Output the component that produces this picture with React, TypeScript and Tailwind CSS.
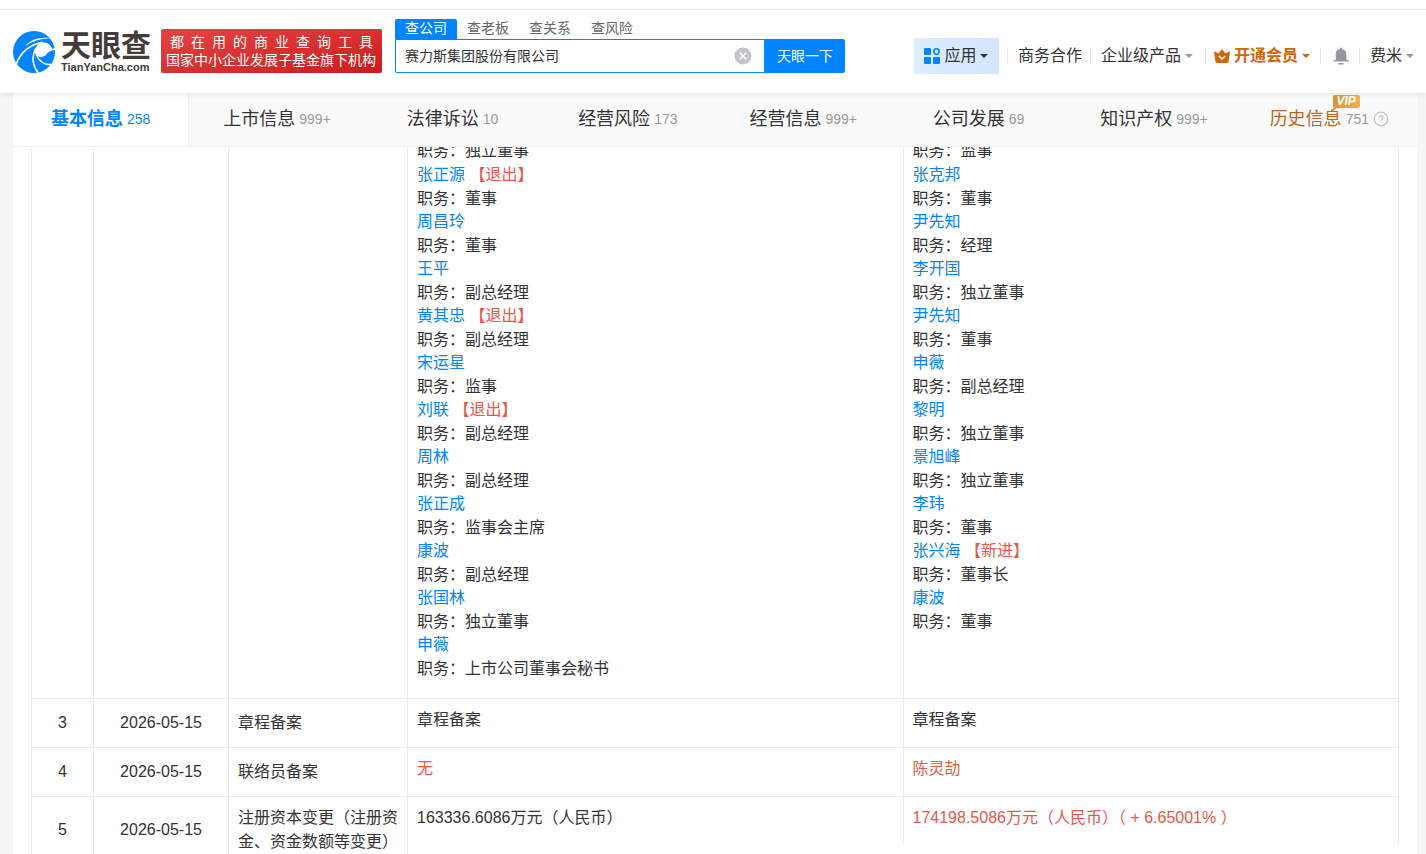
import { useState } from "react";
import type { ReactNode } from "react";

type Person = { name: string; role: string; flag?: string };

const SEARCH_TABS = ["查公司", "查老板", "查关系", "查风险"];

const NAV_TABS = [
    { label: "基本信息", count: "258" },
    { label: "上市信息", count: "999+" },
    { label: "法律诉讼", count: "10" },
    { label: "经营风险", count: "173" },
    { label: "经营信息", count: "999+" },
    { label: "公司发展", count: "69" },
    { label: "知识产权", count: "999+" },
];

const BEFORE: Person[] = [
    { name: "张正源", role: "董事", flag: "退出" },
    { name: "周昌玲", role: "董事" },
    { name: "王平", role: "副总经理" },
    { name: "黄其忠", role: "副总经理", flag: "退出" },
    { name: "宋运星", role: "监事" },
    { name: "刘联", role: "副总经理", flag: "退出" },
    { name: "周林", role: "副总经理" },
    { name: "张正成", role: "监事会主席" },
    { name: "康波", role: "副总经理" },
    { name: "张国林", role: "独立董事" },
    { name: "申薇", role: "上市公司董事会秘书" },
];

const AFTER: Person[] = [
    { name: "张克邦", role: "董事" },
    { name: "尹先知", role: "经理" },
    { name: "李开国", role: "独立董事" },
    { name: "尹先知", role: "董事" },
    { name: "申薇", role: "副总经理" },
    { name: "黎明", role: "独立董事" },
    { name: "景旭峰", role: "独立董事" },
    { name: "李玮", role: "董事" },
    { name: "张兴海", role: "董事长", flag: "新进" },
    { name: "康波", role: "董事" },
];

function Logo() {
    return (
        <a href="#" className="flex shrink-0 items-center gap-1.5 text-[#433c3b]">
            <svg viewBox="0 0 126 126" className="h-[42px] w-[42px]">
                <circle cx="63" cy="63" r="63" fill="#0084ff" />
                <path d="M66 56C70 40 84 33 98 35C110 37 114 46 118 54L128 48L127 57C114 57 104 64 98 73C86 82 70 78 66 66Z" fill="#fff" />
                <path d="M36 46C54 25 82 17 112 22C84 22 60 30 36 46Z" fill="#fff" />
                <path d="M88 34C54 40 24 62 10 98" fill="none" stroke="#fff" strokeWidth="5" />
                <path d="M68 52C56 76 58 102 76 126" fill="none" stroke="#fff" strokeWidth="5" />
                <path d="M70 72C80 92 96 102 114 101" fill="none" stroke="#fff" strokeWidth="5" />
            </svg>
            <span className="flex flex-col">
                <span className="text-[30px] leading-[30px] font-bold">天眼查</span>
                <span className="text-[11px] leading-3 font-bold">TianYanCha.com</span>
            </span>
        </a>
    );
}

function Caret({ className = "text-[#999]" }: { className?: string }) {
    return (
        <svg viewBox="0 0 8 4" className={`h-1 w-2 ${className}`} fill="currentColor">
            <path d="M0 0h8L4 4z" />
        </svg>
    );
}

function Divider() {
    return <span className="h-4 w-px bg-[#e8e8e8]" />;
}

function SearchBox() {
    const [query, setQuery] = useState("赛力斯集团股份有限公司");

    return (
        <div className="mb-3 ml-[13px] w-[450px] shrink-0">
            <div className="flex">
                {SEARCH_TABS.map((tab, i) => (
                    <button
                        key={tab}
                        className={`h-5 w-[62px] rounded-t-xs pb-0.5 text-sm leading-[18px] ${i === 0 ? "bg-[#0084ff] text-white" : "text-[#666]"}`}
                    >
                        {tab}
                    </button>
                ))}
            </div>
            <form className="flex h-[34px]" onSubmit={(e) => e.preventDefault()}>
                <div className="flex flex-1 items-center rounded-bl-xs border border-[#0084ff] pr-3 pl-[9px]">
                    <input
                        aria-label="搜索公司"
                        value={query}
                        onChange={(e) => setQuery(e.target.value)}
                        className="min-w-0 flex-1 text-sm text-[#333] outline-none"
                    />
                    <button type="button" aria-label="清空" onClick={() => setQuery("")}>
                        <svg viewBox="0 0 18 18" className="h-[18px] w-[18px]">
                            <circle cx="9" cy="9" r="8.5" fill="#c2c5cc" />
                            <path d="M5.8 5.8l6.4 6.4M12.2 5.8l-6.4 6.4" stroke="#fff" strokeWidth="1.4" />
                        </svg>
                    </button>
                </div>
                <button className="w-20 rounded-r-xs bg-[#0084ff] text-sm text-white">天眼一下</button>
            </form>
        </div>
    );
}

function UserNav() {
    return (
        <nav className="mt-2 ml-auto flex shrink-0 items-center text-base text-[#333]">
            <button className="flex h-9 w-[85px] items-center justify-center gap-1 rounded-xs bg-linear-to-r from-[#dcedff] to-[#d3e6fc]">
                <svg viewBox="0 0 16 16" className="h-4 w-4" fill="#0084ff">
                    <rect width="7" height="7" rx="1" />
                    <rect y="9" width="7" height="7" rx="1" />
                    <rect x="9" y="9" width="7" height="7" rx="1" />
                    <circle cx="12.5" cy="3.5" r="2.7" fill="none" stroke="#0084ff" strokeWidth="1.5" />
                </svg>
                <span>应用</span>
                <Caret className="text-[#333]" />
            </button>
            <span className="ml-2 flex items-center gap-2.5">
                <Divider />
                <a href="#">商务合作</a>
            </span>
            <span className="ml-2 flex items-center gap-2.5">
                <Divider />
                <a href="#" className="flex items-center gap-1">企业级产品<Caret /></a>
            </span>
            <span className="ml-3 flex items-center gap-2">
                <Divider />
                <a href="#" className="flex items-center gap-1 font-bold text-[#d0650b]">
                    <svg viewBox="0 0 16 14" className="h-3.5 w-4" fill="currentColor">
                        <path d="M.8 2.6L4.6 4.4 8 0l3.4 4.4 3.8-1.8a.5.5 0 0 1 .7.6L14.5 12.8a1.5 1.5 0 0 1-1.5 1.2H3a1.5 1.5 0 0 1-1.5-1.2L.1 3.2a.5.5 0 0 1 .7-.6z" />
                        <path d="M4.8 7L8 10l3.2-3" fill="none" stroke="#fff" strokeWidth="1.6" />
                    </svg>
                    开通会员
                    <Caret className="text-[#d0650b]" />
                </a>
            </span>
            <span className="ml-2.5 flex items-center gap-3">
                <Divider />
                <button aria-label="消息">
                    <svg viewBox="0 0 16 18" className="h-[18px] w-4" fill="#94979c">
                        <path d="M7 1.5a1 1 0 0 1 2 0v.6A5.3 5.3 0 0 1 13.3 7.3V13H15a.7.7 0 0 1 .7.7v.8H.3v-.8A.7.7 0 0 1 1 13h1.7V7.3A5.3 5.3 0 0 1 7 2.1z" />
                        <path d="M5.5 16h5v1.5h-5z" />
                    </svg>
                </button>
            </span>
            <span className="ml-2.5 flex items-center gap-2.5">
                <Divider />
                <button className="flex items-center gap-1">费米<Caret /></button>
            </span>
        </nav>
    );
}

function Header() {
    return (
        <header className="relative z-10 flex h-[84px] shrink-0 items-center border-t border-[#e4e4e4] bg-white pr-3 pl-[13px] shadow-[0_2px_4px_rgba(0,0,0,0.08)]">
            <Logo />
            <div className="mb-0.5 ml-2.5 w-[221px] shrink-0 rounded-xs bg-linear-to-br from-[#e54343] to-[#cb1b1c] px-[5px] py-1 text-sm leading-[18px] whitespace-nowrap text-white">
                <p className="px-1 [text-align-last:justify]">都 在 用 的 商 业 查 询 工 具</p>
                <p>国家中小企业发展子基金旗下机构</p>
            </div>
            <SearchBox />
            <UserNav />
        </header>
    );
}

function VipBadge() {
    return (
        <span className="absolute -top-2.5 -right-[18px] h-[13px] w-[27px] rounded-xs bg-linear-to-r from-[#dd9237] to-[#eeb04f] text-center text-xs leading-[13px] font-bold text-white italic">
            VIP
            <svg viewBox="0 0 5 4" className="absolute top-full left-0 h-1 w-[5px]" fill="#dd9237">
                <path d="M0-1h5L0 3z" />
            </svg>
        </span>
    );
}

function SectionNav() {
    return (
        <nav className="flex h-[54px] shrink-0 border-b border-[#f0f0f0] bg-[#fafafa]">
            {NAV_TABS.map((tab, i) => (
                <a
                    key={tab.label}
                    href="#"
                    className={`flex flex-1 items-center justify-center gap-1 pb-0.5 ${i === 0 ? "border-r border-[#f0f0f0] bg-white text-[#0084ff]" : "text-[#333]"}`}
                >
                    <span className={`text-lg ${i === 0 ? "font-bold" : ""}`}>{tab.label}</span>
                    <span className={`text-sm ${i === 0 ? "" : "text-[#999]"}`}>{tab.count}</span>
                </a>
            ))}
            <a href="#" className="flex flex-1 items-center justify-center gap-1 pb-0.5">
                <span className="relative text-lg text-[#c1641c]">
                    历史信息
                    <VipBadge />
                </span>
                <span className="text-sm text-[#999]">751</span>
                <svg viewBox="0 0 16 16" className="h-4 w-4" fill="none" stroke="#c3c7cd" strokeWidth="1.3">
                    <circle cx="8" cy="8" r="6.8" />
                    <path d="M6 6.6a2 2 0 1 1 2.9 1.8c-.6.3-.9.6-.9 1.3M8 10.8v1.2" />
                </svg>
            </a>
        </nav>
    );
}

function People({ first, list }: { first: string; list: Person[] }) {
    return (
        <>
            <p className="leading-6">职务：{first}</p>
            {list.map((person) => (
                <div key={person.name + person.role}>
                    <p className="leading-6">
                        <a href="#" className="text-[#0084ff]">{person.name}</a>
                        {person.flag && <span className="text-[#e9574a]"> 【{person.flag}】</span>}
                    </p>
                    <p className="leading-[23px]">职务：{person.role}</p>
                </div>
            ))}
        </>
    );
}

function ChangeRow({ no, date, item, before, after }: { no?: string; date?: string; item?: string; before: ReactNode; after: ReactNode }) {
    return (
        <tr className="border-b border-[#e3edf2]">
            <td className="border-x border-[#e3edf2] text-center">{no}</td>
            <td className="border-r border-[#e3edf2] text-center">{date}</td>
            <td className="border-r border-[#e3edf2] py-[9px] pl-[9px] leading-6">{item}</td>
            <td colSpan={2} className="align-top">
                <div className="flex min-h-12 leading-6">
                    <div className="flex-1 border-r border-[#e3edf2] px-[9px] pt-[9px]">{before}</div>
                    <div className="flex-1 border-r border-[#e3edf2] px-[9px] pt-[9px]">{after}</div>
                </div>
            </td>
        </tr>
    );
}

function ChangeTable() {
    return (
        <table className="-mt-[17px] w-full table-fixed border-collapse text-base text-[#333]">
            <colgroup>
                <col className="w-[62px]" />
                <col className="w-[135px]" />
                <col className="w-[179px]" />
                <col />
                <col />
            </colgroup>
            <tbody>
                <ChangeRow
                    before={<div className="pb-[18px]"><People first="独立董事" list={BEFORE} /></div>}
                    after={<People first="监事" list={AFTER} />}
                />
                <ChangeRow no="3" date="2026-05-15" item="章程备案" before="章程备案" after="章程备案" />
                <ChangeRow
                    no="4"
                    date="2026-05-15"
                    item="联络员备案"
                    before={<span className="text-[#e9574a]">无</span>}
                    after={<span className="text-[#e9574a]">陈灵劼</span>}
                />
                <ChangeRow
                    no="5"
                    date="2026-05-15"
                    item="注册资本变更（注册资金、资金数额等变更）"
                    before="163336.6086万元（人民币）"
                    after={<span className="text-[#e9574a]">174198.5086万元（人民币）（ + 6.65001% ）</span>}
                />
            </tbody>
        </table>
    );
}

export default function App() {
    return (
        <div className="flex h-screen flex-col overflow-hidden bg-[#f5f5f5] font-['Liberation_Sans','Noto_Sans_CJK_SC',sans-serif]">
            <div className="h-[9px] shrink-0 bg-white" />
            <Header />
            <main className="mr-[9px] ml-[13px] flex min-h-0 flex-1 flex-col bg-white">
                <SectionNav />
                <div className="min-h-0 flex-1 overflow-hidden px-[18px]">
                    <ChangeTable />
                </div>
            </main>
        </div>
    );
}
